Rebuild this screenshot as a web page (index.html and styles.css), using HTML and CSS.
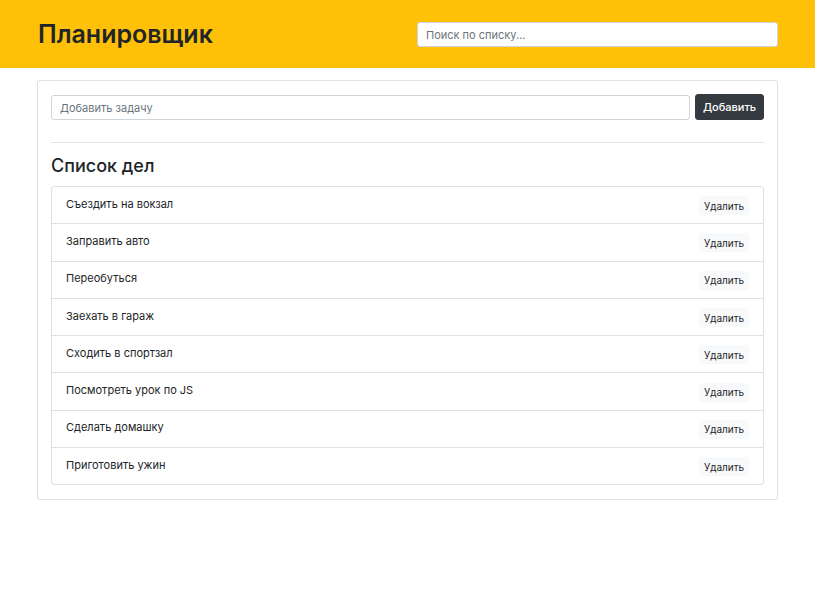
FILE: index.html
```html
<!DOCTYPE html>
<html lang="ru">
<head>
<meta charset="utf-8">
<title>Планировщик</title>
<link rel="stylesheet" href="styles.css">
</head>
<body>
<header class="header">
  <div class="header-inner">
    <h1 class="brand">Планировщик</h1>
    <input class="search" type="text" placeholder="Поиск по списку...">
  </div>
</header>
<main class="card">
  <form class="add-form">
    <input class="add-input" type="text" placeholder="Добавить задачу">
    <button class="btn-dark" type="button">Добавить</button>
  </form>
  <hr class="divider">
  <h2 class="list-title">Список дел</h2>
  <ul class="list">
    <li class="item"><span>Съездить на вокзал</span><button class="btn-del" type="button">Удалить</button></li>
    <li class="item"><span>Заправить авто</span><button class="btn-del" type="button">Удалить</button></li>
    <li class="item"><span>Переобуться</span><button class="btn-del" type="button">Удалить</button></li>
    <li class="item"><span>Заехать в гараж</span><button class="btn-del" type="button">Удалить</button></li>
    <li class="item"><span>Сходить в спортзал</span><button class="btn-del" type="button">Удалить</button></li>
    <li class="item"><span>Посмотреть урок по JS</span><button class="btn-del" type="button">Удалить</button></li>
    <li class="item"><span>Сделать домашку</span><button class="btn-del" type="button">Удалить</button></li>
    <li class="item"><span>Приготовить ужин</span><button class="btn-del" type="button">Удалить</button></li>
  </ul>
</main>
</body>
</html>
```
FILE: styles.css
```css
* { box-sizing: border-box; }
body {
  margin: 0;
  font-family: Inter, "Liberation Sans", Arial, sans-serif;
  color: #212529;
  background: #fff;
}
.header {
  background: #ffc107;
  height: 68px;
}
.header-inner {
  width: 741px;
  margin: 0 0 0 37px;
  height: 68px;
  display: flex;
  align-items: center;
  justify-content: space-between;
}
.brand {
  margin: 0 0 0 1px;
  font-size: 25px;
  font-weight: 600;
  line-height: 1.2;
  color: #212529;
}
.search, .add-input {
  font-family: inherit;
  font-size: 11px;
  color: #495057;
  height: 25px;
  border: 1px solid #ced4da;
  border-radius: 3px;
  padding: 0 8px;
  background: #fff;
  outline: none;
}
.search {
  width: 361px;
  margin-top: 1px;
}
.search::placeholder, .add-input::placeholder { color: #6c757d; }
.card {
  width: 741px;
  margin: 12px 0 0 37px;
  border: 1px solid rgba(0,0,0,.125);
  border-radius: 3px;
  padding: 13px 13px 14px;
}
.add-form {
  display: flex;
  gap: 5px;
  align-items: center;
}
.add-input {
  flex: 1;
  margin-top: 1px;
}
.btn-dark {
  font-family: inherit;
  font-size: 11px;
  font-weight: 500;
  color: #fff;
  background: #343a40;
  border: 1px solid #343a40;
  border-radius: 3px;
  height: 26px;
  width: 69px;
  padding: 0;
}
.divider {
  border: 0;
  border-top: 1px solid rgba(0,0,0,.1);
  margin: 22px 0 0;
}
.list-title {
  margin: 12px 0 0;
  font-size: 18px;
  font-weight: 500;
  line-height: 1.2;
  height: 31px;
}
.list {
  list-style: none;
  margin: 0;
  padding: 0;
  border: 1px solid rgba(0,0,0,.125);
  border-radius: 3px;
}
.item {
  display: flex;
  align-items: center;
  justify-content: space-between;
  height: 37.29px;
  padding: 0 14px 0 14px;
  font-size: 11px;
  border-top: 1px solid rgba(0,0,0,.125);
}
.item:first-child {
  border-top: 0;
  height: 36.3px;
}
.item span { margin-top: -3px; }
.btn-del {
  font-family: inherit;
  font-size: 10px;
  color: #212529;
  background: #f8f9fa;
  border: 0;
  border-radius: 2px;
  width: 50px;
  height: 19px;
  padding: 0;
  margin-top: 1px;
}
```
